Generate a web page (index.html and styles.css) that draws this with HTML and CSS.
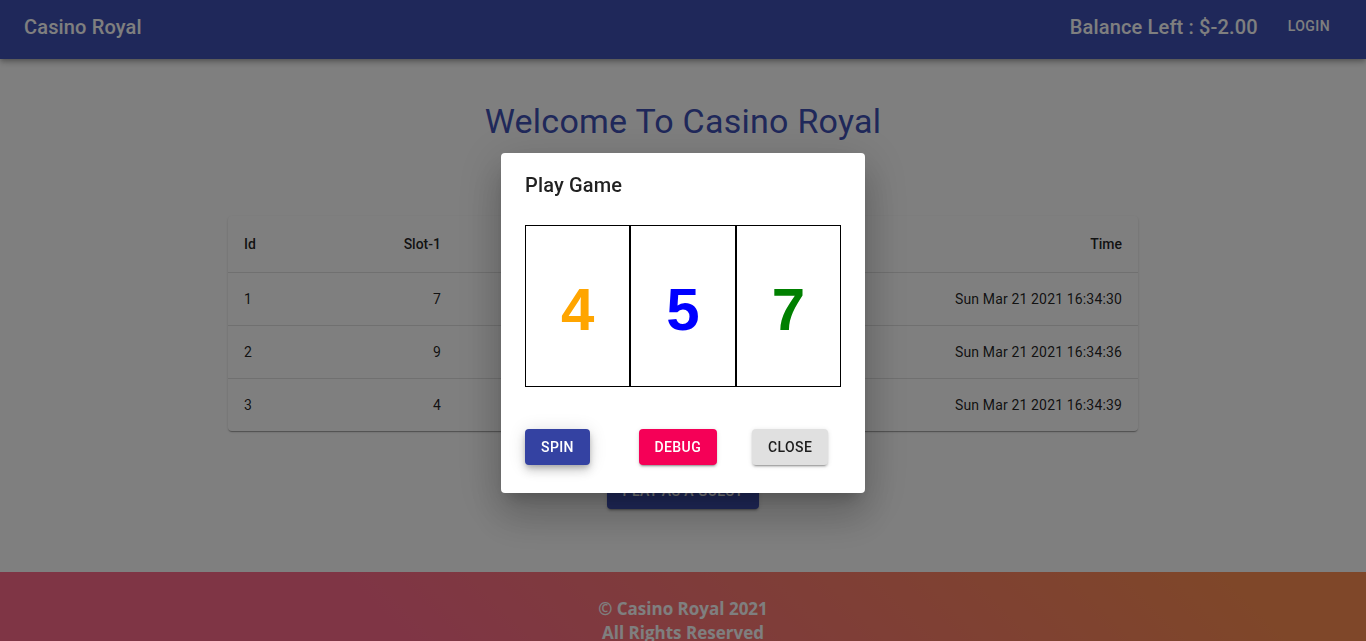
FILE: index.html
```html
<!DOCTYPE html>
<html lang="en">
<head>
<meta charset="utf-8">
<title>Casino Royal</title>
<link rel="stylesheet" href="styles.css">
</head>
<body>
<header class="appbar">
  <div class="brand">Casino Royal</div>
  <div class="bar-right">
    <span class="balance">Balance Left : $-2.00</span>
    <button class="text-btn">Login</button>
  </div>
</header>

<main class="content">
  <h1 class="welcome">Welcome To Casino Royal</h1>
  <div class="paper">
    <table class="games">
      <colgroup>
        <col class="c-id"><col class="c-s1"><col class="c-s2"><col class="c-s3"><col>
      </colgroup>
      <thead>
        <tr><th class="left">Id</th><th>Slot-1</th><th>Slot-2</th><th>Slot-3</th><th>Time</th></tr>
      </thead>
      <tbody>
        <tr><td class="left">1</td><td>7</td><td>3</td><td>2</td><td>Sun Mar 21 2021 16:34:30</td></tr>
        <tr><td class="left">2</td><td>9</td><td>1</td><td>6</td><td>Sun Mar 21 2021 16:34:36</td></tr>
        <tr><td class="left">3</td><td>4</td><td>5</td><td>7</td><td>Sun Mar 21 2021 16:34:39</td></tr>
      </tbody>
    </table>
  </div>
  <div class="play-row">
    <button class="btn btn-primary">Play As A Guest</button>
  </div>
</main>

<footer class="footer">
  <div>© Casino Royal 2021</div>
  <div>All Rights Reserved</div>
</footer>

<div class="backdrop">
  <div class="dialog">
    <h2 class="dialog-title">Play Game</h2>
    <div class="slots">
      <div class="slot slot-orange">4</div>
      <div class="slot slot-blue">5</div>
      <div class="slot slot-green">7</div>
    </div>
    <div class="actions">
      <div class="cell"><button class="btn btn-spin">Spin</button></div>
      <div class="cell"><button class="btn btn-secondary">Debug</button></div>
      <div class="cell"><button class="btn btn-default">Close</button></div>
    </div>
  </div>
</div>
</body>
</html>
```

FILE: styles.css
```css
* { box-sizing: border-box; }

html, body {
  margin: 0;
  padding: 0;
  background: #ffffff;
  font-family: Roboto, "Liberation Sans", sans-serif;
  color: rgba(0, 0, 0, 0.87);
}

button {
  font-family: Roboto, "Liberation Sans", sans-serif;
  border: none;
  cursor: pointer;
}

/* App bar */
.appbar {
  height: 59px;
  background: #3f51b5;
  color: #ffffff;
  display: flex;
  justify-content: space-between;
  align-items: flex-start;
  padding: 11px 28px 0 24px;
  box-shadow: 0 2px 4px -1px rgba(0,0,0,0.2), 0 4px 5px 0 rgba(0,0,0,0.14), 0 1px 10px 0 rgba(0,0,0,0.12);
  position: relative;
  z-index: 1;
}

.brand {
  font-size: 20px;
  font-weight: 500;
  line-height: 32px;
  letter-spacing: 0.0075em;
}

.bar-right {
  display: flex;
  align-items: flex-start;
}

.balance {
  font-size: 20px;
  font-weight: 500;
  line-height: 32px;
  letter-spacing: 0.0075em;
  margin-right: 23px;
  position: relative;
  left: 1px;
}

.text-btn {
  background: transparent;
  color: #ffffff;
  font-size: 14px;
  font-weight: 500;
  text-transform: uppercase;
  letter-spacing: 0.02857em;
  line-height: 24px;
  padding: 6px 8px;
  margin-top: -3px;
}

/* Main content */
.content {
  padding-top: 41px;
  padding-bottom: 63px;
}

.welcome {
  margin: 0;
  text-align: center;
  font-size: 34px;
  font-weight: 400;
  line-height: 42px;
  letter-spacing: 0.00735em;
  color: #3f51b5;
}

.paper {
  width: 910px;
  margin: 74px auto 0;
  background: #ffffff;
  border-radius: 4px;
  box-shadow: 0 2px 1px -1px rgba(0,0,0,0.2), 0 1px 1px 0 rgba(0,0,0,0.14), 0 1px 3px 0 rgba(0,0,0,0.12);
  overflow: hidden;
}

.games {
  width: 100%;
  border-collapse: collapse;
  table-layout: fixed;
  font-size: 14px;
}

.c-id { width: 130px; }
.c-s1 { width: 99px; }
.c-s2 { width: 200px; }
.c-s3 { width: 200px; }

.games th,
.games td {
  padding: 16px;
  text-align: right;
  border-bottom: 1px solid rgba(224, 224, 224, 1);
  color: rgba(0, 0, 0, 0.87);
}

.games th {
  font-weight: 500;
  line-height: 24px;
}

.games td {
  font-weight: 400;
  line-height: 20px;
  letter-spacing: 0.01071em;
}

.games tbody tr:last-child td { border-bottom: none; }

.games .left { text-align: left; }

.play-row {
  display: flex;
  justify-content: center;
  margin-top: 42px;
}

/* Buttons */
.btn {
  font-size: 14px;
  font-weight: 500;
  text-transform: uppercase;
  letter-spacing: 0.02857em;
  line-height: 24px;
  padding: 6px 16px;
  border-radius: 4px;
  box-shadow: 0 3px 1px -2px rgba(0,0,0,0.2), 0 2px 2px 0 rgba(0,0,0,0.14), 0 1px 5px 0 rgba(0,0,0,0.12);
}

.btn-primary { background: #3f51b5; color: #ffffff; }
.btn-spin { background: #3442a2; color: #ffffff; box-shadow: 0 3px 5px -1px rgba(0,0,0,0.2), 0 6px 10px 0 rgba(0,0,0,0.14), 0 1px 18px 0 rgba(0,0,0,0.12); }
.btn-secondary { background: #f50057; color: #ffffff; }
.btn-default { background: #e0e0e0; color: rgba(0, 0, 0, 0.87); }

/* Footer */
.footer {
  background: linear-gradient(45deg, #FE6B8B 30%, #FF8E53 90%);
  color: #ffffff;
  text-align: center;
  font-family: "Open Sans", "Noto Sans", sans-serif;
  font-weight: 700;
  font-size: 17px;
  line-height: 24px;
  padding: 25px 0 24px;
}

/* Dialog */
.backdrop {
  position: fixed;
  inset: 0;
  background: rgba(0, 0, 0, 0.5);
  display: flex;
  justify-content: center;
  align-items: flex-start;
  padding-top: 153px;
  z-index: 10;
}

.dialog {
  width: 364px;
  height: 340px;
  background: #ffffff;
  border-radius: 4px;
  box-shadow: 0 11px 15px -7px rgba(0,0,0,0.2), 0 24px 38px 3px rgba(0,0,0,0.14), 0 9px 46px 8px rgba(0,0,0,0.12);
  overflow: hidden;
}

.dialog-title {
  margin: 0;
  padding: 16px 24px;
  font-size: 20px;
  font-weight: 500;
  line-height: 32px;
  letter-spacing: 0.0075em;
  color: rgba(0, 0, 0, 0.87);
}

.slots {
  display: flex;
  margin: 8px 24px 0;
  height: 162px;
}

.slot {
  flex: 1;
  border: 1px solid #000000;
  display: flex;
  align-items: center;
  justify-content: center;
  font-family: "Liberation Sans", Arial, sans-serif;
  font-weight: 700;
  font-size: 60px;
  padding-top: 6px;
}

.slot-orange { color: #ffa500; }
.slot-blue { color: #0000ff; }
.slot-green { color: #008000; }

.actions {
  display: grid;
  grid-template-columns: repeat(3, 113.5px);
  margin: 42px 0 0 24px;
}

.cell {
  display: flex;
  align-items: flex-start;
}
```
